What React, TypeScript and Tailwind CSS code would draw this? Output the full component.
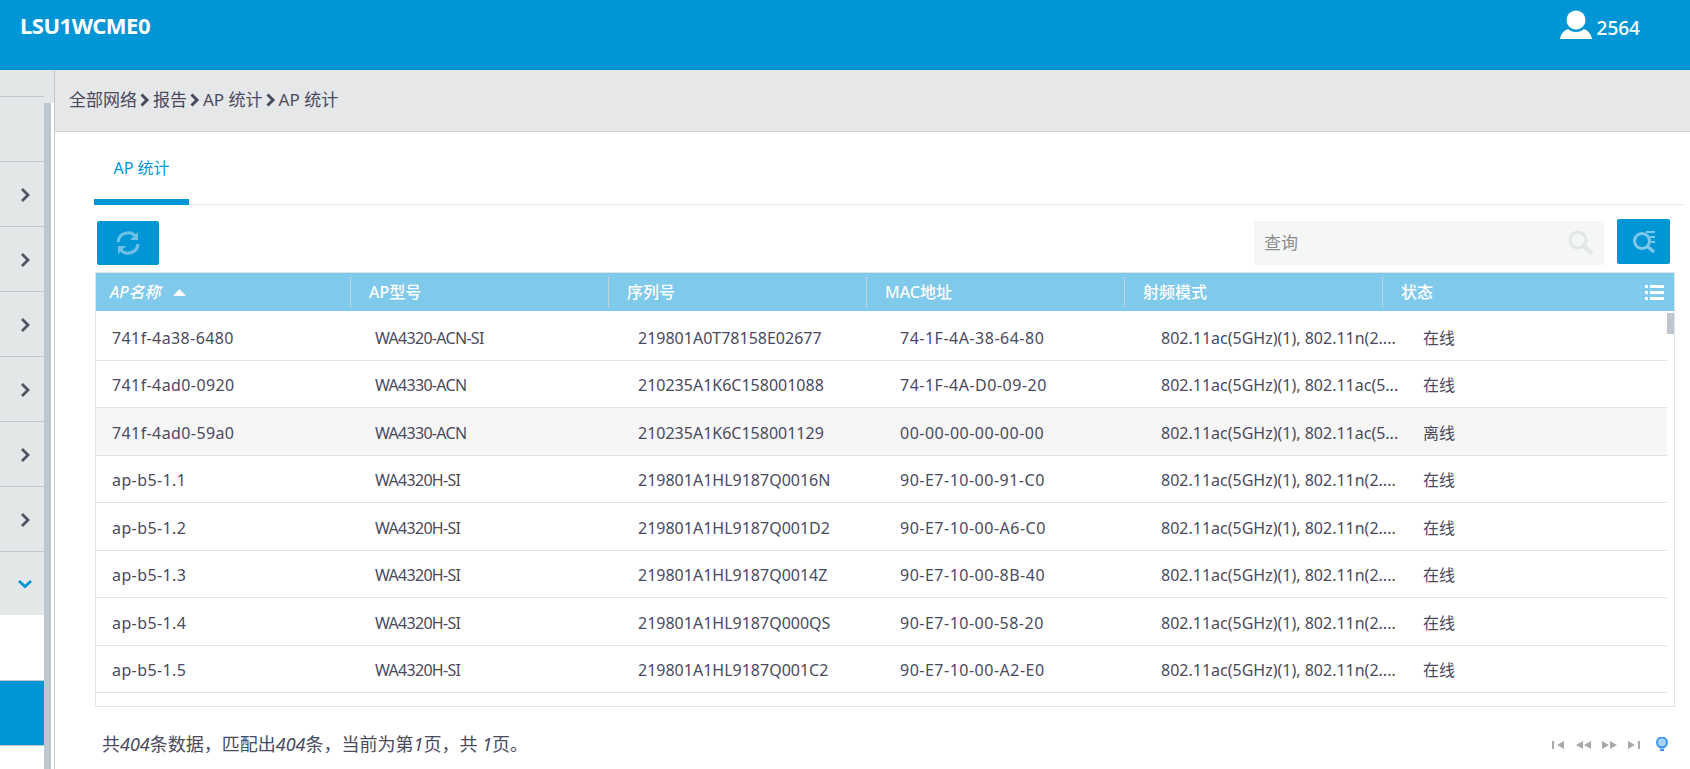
const FONT = "font-['Noto_Sans','Noto_Sans_CJK_SC',sans-serif]";

const M1 = '802.11ac(5GHz)(1), 802.11n(2....';
const M2 = '802.11ac(5GHz)(1), 802.11ac(5...';
const rows = [
  ['741f-4a38-6480', 'WA4320-ACN-SI', '219801A0T78158E02677', '74-1F-4A-38-64-80', M1, '在线'],
  ['741f-4ad0-0920', 'WA4330-ACN', '210235A1K6C158001088', '74-1F-4A-D0-09-20', M2, '在线'],
  ['741f-4ad0-59a0', 'WA4330-ACN', '210235A1K6C158001129', '00-00-00-00-00-00', M2, '离线'],
  ['ap-b5-1.1', 'WA4320H-SI', '219801A1HL9187Q0016N', '90-E7-10-00-91-C0', M1, '在线'],
  ['ap-b5-1.2', 'WA4320H-SI', '219801A1HL9187Q001D2', '90-E7-10-00-A6-C0', M1, '在线'],
  ['ap-b5-1.3', 'WA4320H-SI', '219801A1HL9187Q0014Z', '90-E7-10-00-8B-40', M1, '在线'],
  ['ap-b5-1.4', 'WA4320H-SI', '219801A1HL9187Q000QS', '90-E7-10-00-58-20', M1, '在线'],
  ['ap-b5-1.5', 'WA4320H-SI', '219801A1HL9187Q001C2', '90-E7-10-00-A2-E0', M1, '在线'],
];
const bodyW = [
  'w-[263px] tracking-[0.4px]',
  'w-[263px] tracking-[-0.7px]',
  'w-[262px]',
  'w-[261px] tracking-[0.5px]',
  'w-[262px]',
  'w-[100px]',
];
const heads = ['AP型号', '序列号', 'MAC地址', '射频模式', '状态'];

function Chev({ down = false }: { down?: boolean }) {
  return down ? (
    <svg width="16" height="10" viewBox="0 0 16 10" fill="none"><path d="M2 2l6 5.500L14 2" stroke="#0096d6" strokeWidth="2.800" /></svg>
  ) : (
    <svg width="11" height="16" viewBox="0 0 11 16" fill="none"><path d="M2 2l6 6-6 6" stroke="#4f5563" strokeWidth="2.800" /></svg>
  );
}

function Crumb() {
  return (
    <svg className="mx-[1px]" width="10" height="14" viewBox="0 0 10 14" fill="none"><path d="M1.500 1.500L7 7l-5.500 5.500" stroke="#4a4a5e" strokeWidth="3" /></svg>
  );
}

function SideItem({ children }: { children?: React.ReactNode }) {
  return (
    <div className="flex h-[65px] items-center border-b border-[#c4c7c9] bg-[#e4e7e8] pl-[20px] pt-[2px]">{children}</div>
  );
}

function Pager({ d, w = 13 }: { d: string; w?: number }) {
  return (
    <svg width={w} height="8" viewBox={`0 0 ${w} 8`} fill="#a9a9a9"><path d={d} /></svg>
  );
}

export default function App() {
  return (
    <div className={`flex h-[769px] w-[1690px] flex-col overflow-hidden bg-white ${FONT}`}>
      <header className="flex h-[70px] shrink-0 items-start justify-between bg-[#0096d6] text-white">
        <div className="ml-[20px] mt-[11px] text-[22px] font-bold leading-[28px] tracking-[-0.5px]">LSU1WCME0</div>
        <div className="mr-[50px] mt-[10px] flex items-start gap-[5px]">
          <svg width="32" height="30" viewBox="0 0 32 30" fill="#fff">
            <circle cx="16" cy="10" r="9.500" />
            <path d="M0 29c1-5 3-8 8-10 4 4 12 4 16 0 5 2 7 5 8 10z" />
          </svg>
          <span className="mt-[5px] text-[19px] font-medium leading-[26px]">2564</span>
        </div>
      </header>
      <div className="flex min-h-0 flex-1">
        <aside className="flex w-[55px] shrink-0 border-r border-[#c4c7c9] bg-white">
          <div className="flex w-[44px] flex-col">
            <div className="h-[27px] shrink-0 border-b border-[#c4c7c9] bg-[#e4e7e8]" />
            <SideItem />
            <SideItem><Chev /></SideItem>
            <SideItem><Chev /></SideItem>
            <SideItem><Chev /></SideItem>
            <SideItem><Chev /></SideItem>
            <SideItem><Chev /></SideItem>
            <SideItem><Chev /></SideItem>
            <div className="flex h-[63px] shrink-0 items-center bg-[#e4e7e8] pl-[17px]"><Chev down /></div>
            <div className="h-[66px] shrink-0 border-b border-[#c4c7c9] bg-white" />
            <div className="h-[65px] shrink-0 border-b border-[#c4c7c9] bg-[#0096d6]" />
            <div className="flex-1 bg-white" />
          </div>
          <div className="flex w-[10px] flex-col">
            <div className="h-[33px] bg-[#e4e7e8]" />
            <div className="w-[7px] flex-1 bg-[#bec6d0]" />
          </div>
        </aside>
        <main className="flex min-w-0 flex-1 flex-col">
          <div className="flex h-[62px] shrink-0 items-center gap-[2px] border-b border-[#cfd2d4] bg-[#e5e7e9] pb-[2px] pl-[14px] text-[17px] text-[#4a4a5e]">
            全部网络<Crumb />报告<Crumb />AP 统计<Crumb />AP 统计
          </div>
          <div className="ml-[39px] mr-[6px] flex h-[73px] shrink-0 items-end border-b border-[#e5e7e9]">
            <div className="-mb-[1px] flex h-[65px] w-[95px] items-center justify-center border-b-[6px] border-[#0096d6] pb-[4px] text-[16px] text-[#0096d6]">
              AP 统计
            </div>
          </div>
          <div className="ml-[42px] mr-[20px] mt-[14px] flex h-[46px] shrink-0 items-start justify-between">
            <button className="mt-[2px] flex h-[44px] w-[62px] items-center justify-center rounded-[2px] bg-[#0096d6]">
              <svg width="28" height="28" viewBox="0 0 28 28" fill="none" stroke="#6fc0e6" strokeWidth="3">
                <path d="M4 13a10 10 0 0 1 18-5" />
                <path d="M24 15a10 10 0 0 1-18 5" />
                <path d="M24 3v8h-8z" fill="#6fc0e6" stroke="none" />
                <path d="M4 25v-8h8z" fill="#6fc0e6" stroke="none" />
              </svg>
            </button>
            <div className="flex items-start">
              <div className="mt-[2px] flex h-[44px] w-[350px] items-center justify-between bg-[#f5f7f6] pl-[10px] pr-[10px] text-[17px] text-[#8c8c8c]">
                查询
                <svg width="26" height="26" viewBox="0 0 26 26" fill="none" stroke="#e3e6e6">
                  <circle cx="10" cy="10" r="8" strokeWidth="3" />
                  <path d="M16 16l8 8" strokeWidth="4" />
                </svg>
              </div>
              <button className="ml-[13px] flex h-[45px] w-[53px] items-center justify-center rounded-[2px] bg-[#0096d6]">
                <svg width="26" height="26" viewBox="0 0 26 26" fill="none" stroke="#7fc8ea">
                  <circle cx="11" cy="12" r="7.500" strokeWidth="3" />
                  <path d="M16 17l7 6" strokeWidth="3.500" />
                  <path d="M15 3h9M19 8h5M20 13h4" strokeWidth="2" />
                </svg>
              </button>
            </div>
          </div>
          <section className="ml-[40px] mr-[15px] mt-[7px] h-[435px] shrink-0 overflow-hidden border border-[#e2e5e7]">
            <div className="flex h-[38px] items-center bg-[#7fc9eb] text-[16px] font-medium text-white">
              <div className="flex h-[30px] w-[255px] shrink-0 items-center border-r border-[#c5d3da] pl-[14px] italic">
                AP名称
                <svg className="ml-[12px]" width="13" height="7" viewBox="0 0 13 7" fill="#fff"><path d="M6.500 0L13 7H0z" /></svg>
              </div>
              {heads.map((h, i) => (
                <div
                  key={h}
                  className={`flex h-[30px] shrink-0 items-center ${i < 4 ? 'w-[258px] border-r border-[#c5d3da] pl-[18px]' : 'flex-1 justify-between pl-[18px] pr-[10px]'}`}
                >
                  {h}
                  {i === 4 && (
                    <svg width="19" height="15" viewBox="0 0 19 15" fill="#fff">
                      <path d="M0 0h3v3H0zM5 0h14v3H5zM0 6h3v3H0zM5 6h14v3H5zM0 12h3v3H0zM5 12h14v3H5z" />
                    </svg>
                  )}
                </div>
              ))}
            </div>
            <div className="flex">
              <div className="w-[1571px] shrink-0 pt-[2px]">
                {rows.map((r, i) => (
                  <div
                    key={r[0]}
                    className={`flex h-[47.5px] items-center border-b border-[#e2e5e7] pl-[16px] pt-[3px] text-[16px] text-[#4a4a5e] ${i === 2 ? 'bg-[#f6f6f6]' : ''}`}
                  >
                    {r.map((c, j) => (
                      <div key={j} className={`${bodyW[j]} shrink-0 whitespace-nowrap`}>{c}</div>
                    ))}
                  </div>
                ))}
              </div>
              <div className="mt-[2px] h-[21px] w-[7px] bg-[#bec6d0]" />
            </div>
          </section>
          <div className="ml-[47px] mr-[22px] mt-[24px] flex items-center justify-between text-[18px] text-[#4a4a5e]">
            <div>共<i>404</i>条数据，匹配出<i>404</i>条，当前为第<i>1</i>页，共 <i>1</i>页。</div>
            <div className="flex items-center gap-[11px]">
              <Pager d="M0 0h2v8H0zM12 0v8L5 4z" />
              <Pager w={15} d="M7 0v8L0 4zM15 0v8L8 4z" />
              <Pager w={15} d="M0 0v8l7-4zM8 0v8l7-4z" />
              <Pager d="M0 0v8l7-4zM10 0h2v8h-2z" />
              <svg className="ml-[4px]" width="12" height="15" viewBox="0 0 12 15" fill="none"><path d="M3.500 10C2 9 1 7.500 1 5.500a5 5 0 0 1 10 0C11 7.500 10 9 8.500 10z" fill="#a8d0f8" stroke="#3b97f0" strokeWidth="2" /><path d="M4 11.500h4V14H4z" fill="#3b97f0" /></svg>
            </div>
          </div>
        </main>
      </div>
    </div>
  );
}
